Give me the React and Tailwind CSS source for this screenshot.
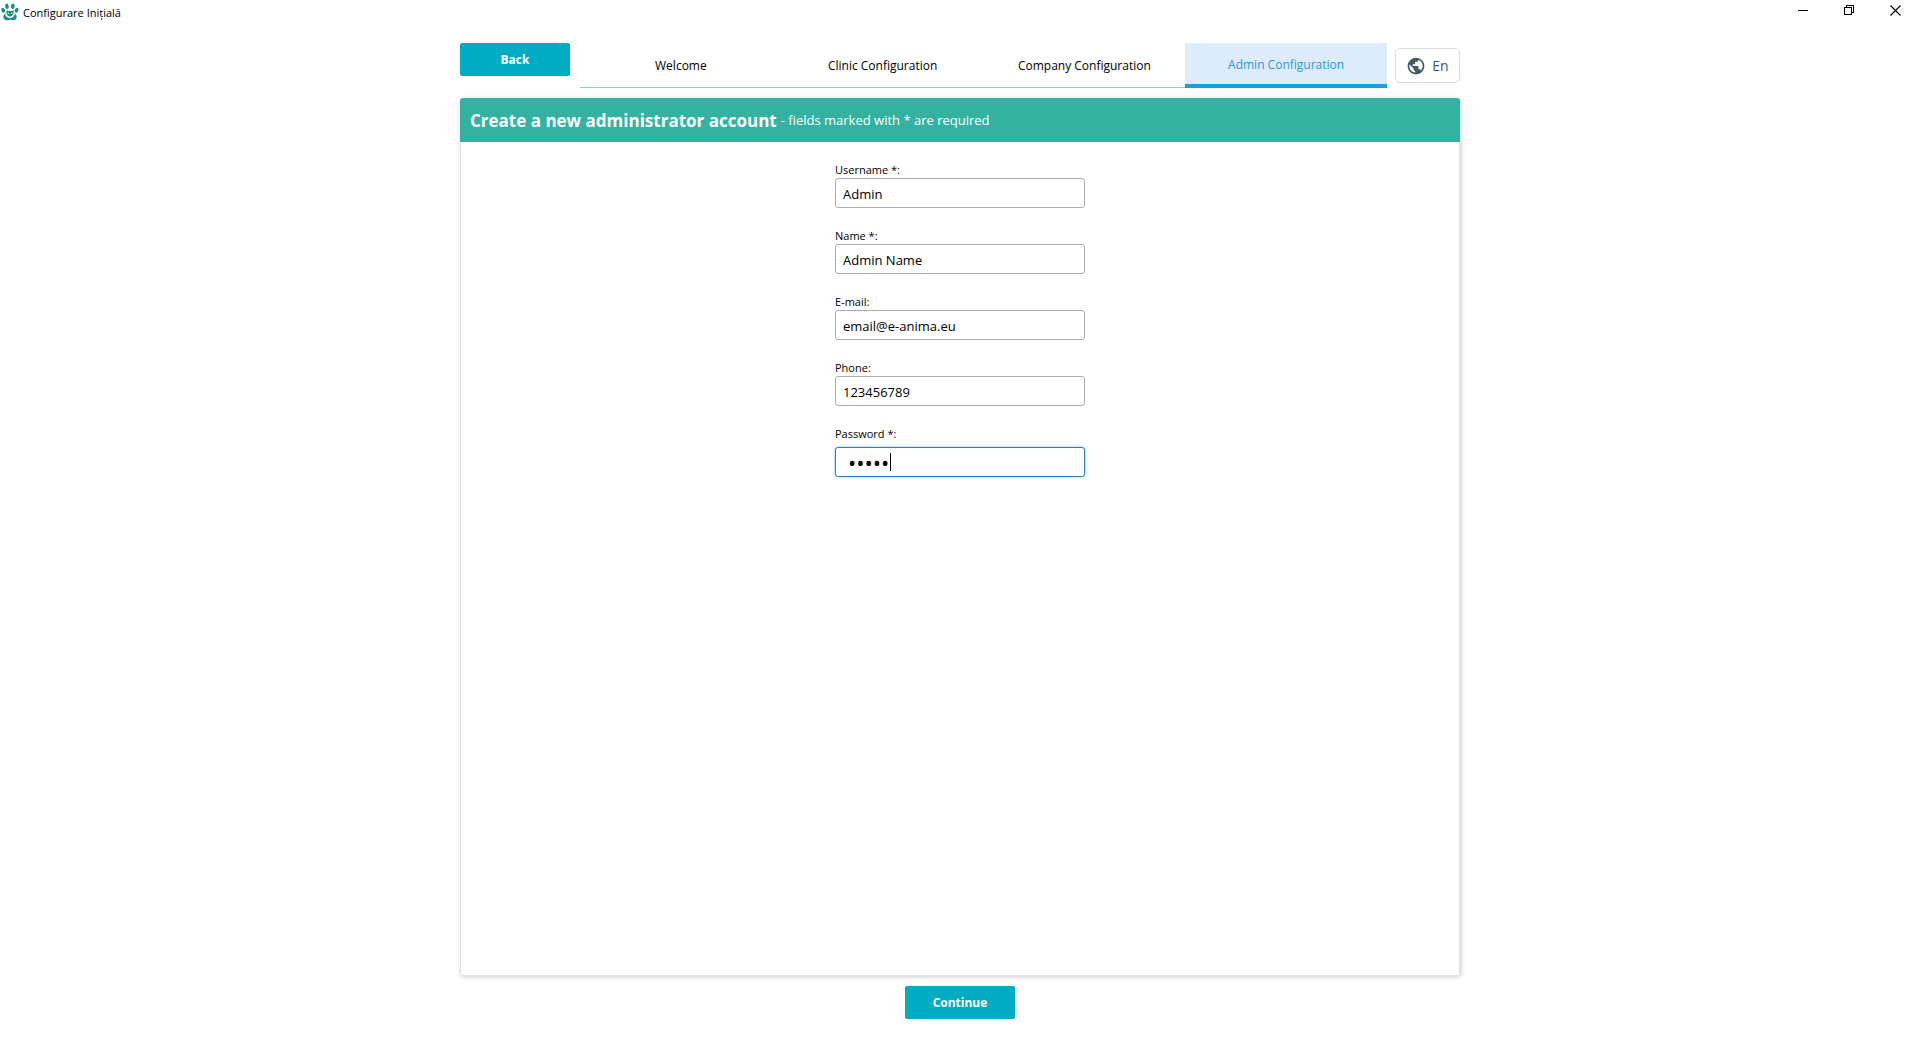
import React, { useState } from "react";

const TABS = ["Welcome", "Clinic Configuration", "Company Configuration", "Admin Configuration"];

const FIELDS = [
  { id: "username", label: "Username *:", value: "Admin", type: "text" },
  { id: "name", label: "Name *:", value: "Admin Name", type: "text" },
  { id: "email", label: "E-mail:", value: "email@e-anima.eu", type: "email" },
  { id: "phone", label: "Phone:", value: "123456789", type: "tel" },
];

function PawIcon() {
  return (
    <svg className="size-[18px]" viewBox="0 0 18 18" fill="#1a8f78" aria-hidden="true">
      <ellipse cx="6" cy="3.3" rx="1.8" ry="2.8" transform="rotate(-8 6 3.3)" />
      <ellipse cx="11.8" cy="3.3" rx="1.8" ry="2.8" transform="rotate(8 11.8 3.3)" />
      <ellipse cx="2.3" cy="7.300" rx="1.800" ry="2.400" transform="rotate(-25 2.300 7.300)" />
      <ellipse cx="15.600" cy="7.300" rx="1.800" ry="2.400" transform="rotate(25 15.600 7.300)" />
      <path d="M5.500 7.300 7.600 8h2.800l2.100-.7.200 2.900-1.300 2.400L9 13.700l-2.400-1.100-1.300-2.400Z" />
      <path d="M4.300 10.600c-1.300 1.100-2.100 2.200-2 3.700.2 2 1.900 3 3.500 3 1.200 0 2-.5 3.200-.5s2 .5 3.200.5c1.600 0 3.300-1 3.500-3 .1-1.500-.7-2.600-2-3.700l-1.500 3L9 15l-3.200-1.400Z" />
      <circle cx="7.300" cy="10.200" r="0.700" fill="#fff" />
      <circle cx="10.700" cy="10.200" r="0.700" fill="#fff" />
      <path d="M4.500 11.500c.6 2 2.300 3.200 4.500 3.200s3.900-1.200 4.500-3.200" stroke="#e4f5f0" strokeWidth="0.900" fill="none" />
    </svg>
  );
}

function TitleBar() {
  return (
    <header className="flex h-6 items-start justify-between">
      <div className="flex items-center gap-1 pt-0.5 pl-px">
        <PawIcon />
        <span className="pt-0.5 text-[11px] leading-[18px]">Configurare Inițială</span>
      </div>
      <div className="flex pr-0.5">
        <button aria-label="Minimize" className="flex h-5 w-[46px] items-center justify-center">
          <svg className="size-[11px]" viewBox="0 0 11 11" stroke="#000" fill="none" shapeRendering="crispEdges">
            <path d="M0 5.500h10" />
          </svg>
        </button>
        <button aria-label="Restore" className="flex h-5 w-[46px] items-center justify-center">
          <svg className="size-[11px]" viewBox="0 0 11 11" stroke="#000" fill="none" shapeRendering="crispEdges">
            <path d="M.5 2.500h7v7h-7zM2.500 2.500v-2h7v7h-2" />
          </svg>
        </button>
        <button aria-label="Close" className="flex h-5 w-[46px] items-center justify-center">
          <svg className="size-[11px]" viewBox="0 0 11 11" stroke="#000" strokeWidth="1.100" fill="none">
            <path d="m.5.500 10 10m0-10-10 10" />
          </svg>
        </button>
      </div>
    </header>
  );
}

function GlobeIcon() {
  return (
    <svg className="size-5" viewBox="0 0 24 24" fill="#455a64" aria-hidden="true">
      <path d="M12 2C6.480 2 2 6.480 2 12s4.480 10 10 10 10-4.480 10-10S17.520 2 12 2zm-1 17.930c-3.950-.49-7-3.850-7-7.930 0-.62.08-1.210.21-1.790L9 15v1c0 1.100.9 2 2 2v1.930zm6.900-2.540c-.26-.81-1-1.390-1.900-1.390h-1v-3c0-.55-.45-1-1-1H8v-2h2c.55 0 1-.45 1-1V7h2c1.100 0 2-.9 2-2v-.41c2.930 1.190 5 4.060 5 7.410 0 2.080-.8 3.970-2.100 5.390z" />
    </svg>
  );
}

function PrimaryButton({ children }) {
  return (
    <button className="h-[33px] w-[110px] rounded-xs bg-[#00acc4] pt-px text-[12px] font-bold text-white">
      {children}
    </button>
  );
}

function Field({ id, label, value, type }) {
  const [text, setText] = useState(value);
  return (
    <div className="flex flex-col">
      <label htmlFor={id} className="text-[11px] leading-4">
        {label}
      </label>
      <input
        id={id}
        type={type}
        value={text}
        onChange={(e) => setText(e.target.value)}
        className="h-[30px] rounded-[3px] border border-[#abadb3] bg-white px-[7px] pt-0.5 text-[13px] outline-none"
      />
    </div>
  );
}

function PasswordField() {
  const [text, setText] = useState("admin");
  return (
    <div className="flex flex-col">
      <label htmlFor="password" className="mb-[5px] text-[11px] leading-4">
        Password *:
      </label>
      <div className="relative flex">
        <input
          id="password"
          type="password"
          value={text}
          onChange={(e) => setText(e.target.value)}
          className="h-[30px] w-full rounded-[3px] border border-[#2a7fc4] bg-white px-3 text-[22px] caret-transparent shadow-[0_0_3px_#7cc4f5] outline-none"
        />
        <span className="absolute top-1.5 left-[55px] h-[18px] w-px bg-black" />
      </div>
    </div>
  );
}

export default function App() {
  return (
    <div className="flex min-h-screen flex-col bg-white font-['Open_Sans','Noto_Sans',sans-serif] text-black">
      <TitleBar />
      <main className="mx-auto flex w-full max-w-[1000px] grow flex-col pt-[19px] pb-[21px]">
        <div className="flex items-start">
          <PrimaryButton>Back</PrimaryButton>
          <nav className="ml-2.5 grid h-[45px] grow grid-cols-4">
            {TABS.map((tab, i) =>
              i === 3 ? (
                <button key={tab} aria-current="step" className="border-b-4 border-[#0ea0ec] bg-[#dcecfc] pt-0.5 text-[12px] text-[#1e9ce0]">
                  {tab}
                </button>
              ) : (
                <button key={tab} className="border-b border-[#7fd3dc] pt-0.5 text-[12px]">
                  {tab}
                </button>
              )
            )}
          </nav>
          <button className="mt-[5px] ml-2 flex h-[35px] w-[65px] items-center justify-center gap-1.5 rounded-[5px] border border-[#dcdcdc] text-[14px] text-[#455a64]">
            <GlobeIcon />
            En
          </button>
        </div>
        <section className="mt-2.5 flex grow flex-col rounded-[3px] border border-[#e2e2e2] shadow-[1px_1px_5px_rgba(0,0,0,0.2)]">
          <div className="-mx-px -mt-px flex h-11 items-center gap-1 rounded-t-[3px] bg-[#33b2a1] px-2.5 pt-0.5 text-white">
            <h1 className="text-[17px] font-bold">Create a new administrator account</h1>
            <p className="text-[13px]">- fields marked with * are required</p>
          </div>
          <form className="mx-auto flex w-[250px] flex-col gap-5 pt-5">
            {FIELDS.map((f) => (
              <Field key={f.id} {...f} />
            ))}
            <PasswordField />
          </form>
        </section>
        <div className="mt-2.5 flex justify-center">
          <PrimaryButton>Continue</PrimaryButton>
        </div>
      </main>
    </div>
  );
}
